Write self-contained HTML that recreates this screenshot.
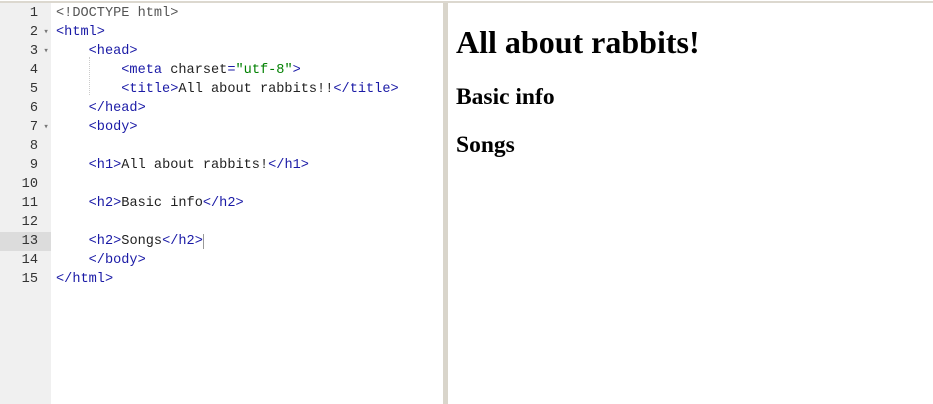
<!DOCTYPE html>
<html><head><style>
body{margin:0;width:933px;height:404px;background:#fff;position:relative;overflow:hidden}
.top{position:absolute;left:0;top:0;width:933px;height:3px;background:#fff;border-bottom:2px solid #dcd8cf;box-sizing:border-box}
.gut{position:absolute;left:0;top:3px;width:51px;height:401px;background:#f0f0f0}
.div{position:absolute;left:443px;top:3px;width:5px;height:401px;background:#d9d5cb}
.lines{position:absolute;left:0;top:4px;font:13.6px/19px "Liberation Mono",monospace}
.l{height:19px;white-space:pre;position:relative}
.n{display:inline-block;width:38px;text-align:right;color:#333;}
.f{display:inline-block;width:18px;color:#777;font-size:9px;vertical-align:top}
.t{color:#1a1aa6}.a{color:#222}.s{color:#008000}.d{color:#555}
.hl{background:#dcdcdc;width:51px;position:absolute;left:0;top:0;height:19px}
.g{position:absolute;left:89px;top:57px;height:38px;border-left:1px dotted #ccc}
.r{position:absolute;left:456px;top:0;font-family:"Liberation Serif",serif;font-weight:bold;color:#000}
</style></head><body>
<div class="top"></div><div class="gut"></div><div class="div"></div><div class="g"></div>
<div class="lines">
<div class="l"><span class="n">1</span><span class="f"></span><span class="d">&lt;!DOCTYPE html&gt;</span></div>
<div class="l"><span class="n">2</span><span class="f"> ▾</span><span class="t">&lt;html&gt;</span></div>
<div class="l"><span class="n">3</span><span class="f"> ▾</span>    <span class="t">&lt;head&gt;</span></div>
<div class="l"><span class="n">4</span><span class="f"></span>        <span class="t">&lt;meta </span><span class="a">charset</span><span class="t">=</span><span class="s">"utf-8"</span><span class="t">&gt;</span></div>
<div class="l"><span class="n">5</span><span class="f"></span>        <span class="t">&lt;title&gt;</span><span class="a">All about rabbits!!</span><span class="t">&lt;/title&gt;</span></div>
<div class="l"><span class="n">6</span><span class="f"></span>    <span class="t">&lt;/head&gt;</span></div>
<div class="l"><span class="n">7</span><span class="f"> ▾</span>    <span class="t">&lt;body&gt;</span></div>
<div class="l"><span class="n">8</span><span class="f"></span></div>
<div class="l"><span class="n">9</span><span class="f"></span>    <span class="t">&lt;h1&gt;</span><span class="a">All about rabbits!</span><span class="t">&lt;/h1&gt;</span></div>
<div class="l"><span class="n">10</span><span class="f"></span></div>
<div class="l"><span class="n">11</span><span class="f"></span>    <span class="t">&lt;h2&gt;</span><span class="a">Basic info</span><span class="t">&lt;/h2&gt;</span></div>
<div class="l"><span class="n">12</span><span class="f"></span></div>
<div class="l"><span class="hl"></span><span class="n" style="position:relative">13</span><span class="f"></span>    <span class="t">&lt;h2&gt;</span><span class="a">Songs</span><span class="t">&lt;/h2&gt;</span><span style="border-left:1px solid #999"> </span></div>
<div class="l"><span class="n">14</span><span class="f"></span>    <span class="t">&lt;/body&gt;</span></div>
<div class="l"><span class="n">15</span><span class="f"></span><span class="t">&lt;/html&gt;</span></div>
</div>
<div class="r" style="top:24px;font-size:32px">All about rabbits!</div>
<div class="r" style="top:84px;font-size:23.5px">Basic info</div>
<div class="r" style="top:132px;font-size:23.5px">Songs</div>
</body></html>
